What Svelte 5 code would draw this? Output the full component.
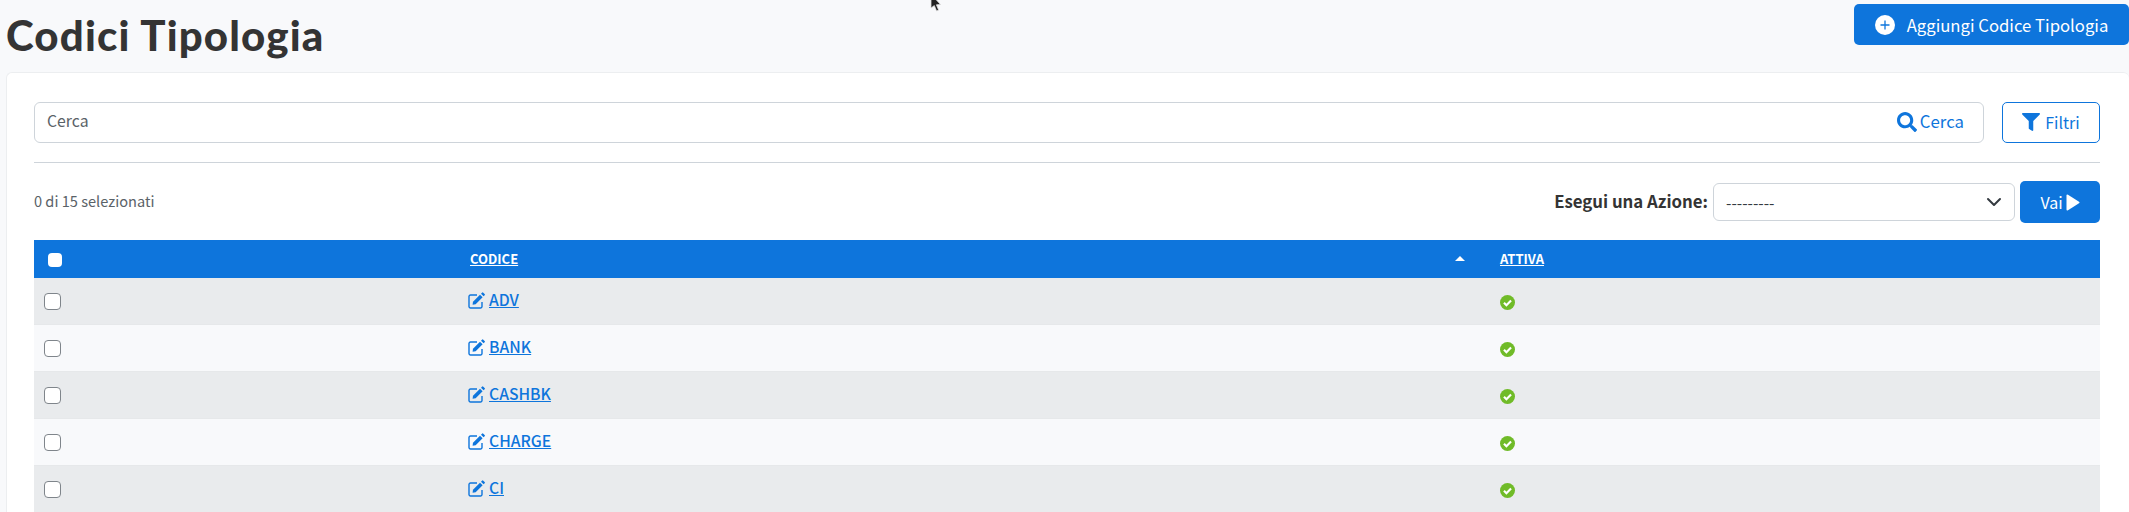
<script>
  const rows = ['ADV', 'BANK', 'CASHBK', 'CHARGE', 'CI'];
</script>

<div class="page">
  <svg class="cursor" width="14" height="14" viewBox="0 0 14 14" aria-hidden="true"><path d="M1-6 L1 8 L4.3 5.6 L6.6 11 L8.6 10 L6.4 4.8 L10.5 4.5 Z" fill="#222" stroke="#ddd" stroke-width=".8"/></svg>
  <header class="top">
    <h1>Codici Tipologia</h1>
    <button class="btn add">
      <svg width="20" height="20" viewBox="0 0 20 20" aria-hidden="true"><circle cx="10" cy="10" r="10" fill="#fff"/><path d="M10 5.5v9M5.5 10h9" stroke="#0e75dc" stroke-width="1.3"/></svg>
      <span>Aggiungi Codice Tipologia</span>
    </button>
  </header>

  <section class="card">
    <div class="search-row">
      <div class="search">
        <span class="ph">Cerca</span>
        <span class="search-btn">
          <svg width="20" height="20" viewBox="0 0 512 512" aria-hidden="true"><path fill="#0e75dc" d="M505 442.700L405.300 343c-4.500-4.500-10.600-7-17-7H372c27.600-35.300 44-79.700 44-128C416 93.100 322.900 0 208 0S0 93.100 0 208s93.100 208 208 208c48.300 0 92.700-16.400 128-44v16.300c0 6.400 2.500 12.500 7 17l99.700 99.700c9.400 9.400 24.600 9.400 33.900 0l28.300-28.300c9.400-9.400 9.400-24.600.1-34zM208 336c-70.700 0-128-57.200-128-128 0-70.700 57.200-128 128-128 70.700 0 128 57.200 128 128 0 70.700-57.200 128-128 128z"/></svg>
          Cerca
        </span>
      </div>
      <button class="btn filter">
        <svg width="18" height="18" viewBox="0 0 512 512" aria-hidden="true"><path fill="#0e75dc" d="M487.976 0H24.028C2.710 0-8.047 25.866 7.058 40.971L192 225.941V432c0 7.831 3.821 15.170 10.237 19.662l80 55.980C298.020 518.690 320 507.493 320 487.980V225.941l184.947-184.970C520.021 25.896 509.338 0 487.976 0z"/></svg>
        Filtri
      </button>
    </div>

    <hr />

    <div class="action-row">
      <span class="count">0 di 15 selezionati</span>
      <div class="actions">
        <strong>Esegui una Azione:</strong>
        <div class="select">
          <span>---------</span>
          <svg width="16" height="16" viewBox="0 0 16 16" aria-hidden="true"><path d="M2 5l6 6 6-6" fill="none" stroke="#343a40" stroke-width="2" stroke-linecap="round" stroke-linejoin="round"/></svg>
        </div>
        <button class="btn vai">
          Vai
          <svg width="15" height="17" viewBox="0 0 14 17" aria-hidden="true"><path d="M1 1.500v14a1 1 0 0 0 1.500.8l11-7a1 1 0 0 0 0-1.600l-11-7A1 1 0 0 0 1 1.500z" fill="#fff"/></svg>
        </button>
      </div>
    </div>

    <div class="table">
      <div class="tr head">
        <div class="c1"><span class="cb white"></span></div>
        <div class="c2"><u>CODICE</u><span class="sort"></span></div>
        <div class="c3"><u>ATTIVA</u></div>
      </div>
      {#each rows as r, i}
        <div class="tr row" class:odd={i % 2 === 0}>
          <div class="c1"><span class="cb"></span></div>
          <div class="c2 code">
            <svg width="17" height="17" viewBox="0 0 17 17" aria-hidden="true">
              <path d="M14 10v4.500a1.500 1.500 0 0 1-1.500 1.500h-10A1.500 1.500 0 0 1 1 14.500v-10A1.500 1.500 0 0 1 2.500 3H9" fill="none" stroke="#0e75dc" stroke-width="1.400"/>
              <path d="M5 9.700L12 2.700l2.600 2.600-7 7-3 .4z" fill="#0e75dc"/>
              <path d="M13 1.700l1-1a.9.900 0 0 1 1.300 0l1.300 1.300a.9.900 0 0 1 0 1.300l-1 1z" fill="#0e75dc"/>
            </svg>
            <a href="#top">{r}</a>
          </div>
          <div class="c3">
            <svg width="15" height="15" viewBox="0 0 14 14" aria-hidden="true"><circle cx="7" cy="7" r="7" fill="#70bb28"/><path d="M3.700 7.200l2.300 2.300 4.300-4.400" fill="none" stroke="#fff" stroke-width="2"/></svg>
          </div>
        </div>
      {/each}
    </div>
  </section>
</div>

<style>
  :global(body) { margin: 0; background: #f8f9fb; }
  .page {
    position: relative;
    height: 512px;
    overflow: hidden;
    background: #f8f9fb;
    font-family: "Noto Sans CJK JP", "Source Sans Pro", Lato, sans-serif;
    color: #343a40;
    padding-left: 6px;
    box-sizing: border-box;
  }
  .cursor { position: absolute; left: 930px; top: 0; }
  .top {
    height: 72px;
    display: flex;
    justify-content: space-between;
    align-items: flex-start;
  }
  h1 {
    margin: 12px 0 0 0;
    font: 900 42px/46px Lato, sans-serif;
    color: #343434;
    letter-spacing: 1.15px;
  }
  .btn {
    font-family: inherit;
    border-radius: 5px;
    cursor: pointer;
    display: inline-flex;
    align-items: center;
    justify-content: center;
    box-sizing: border-box;
  }
  .add {
    margin-top: 4px;
    width: 275px;
    height: 41px;
    gap: 12px;
    background: #0e75dc;
    border: 0;
    color: #fff;
    font-size: 16.7px;
    line-height: 20px;
  }
  .card {
    background: #fff;
    border: 1px solid #eceef0;
    border-right: 0;
    border-radius: 6px 6px 0 0;
    height: 460px;
    padding: 29px 29px 0 27px;
    box-sizing: border-box;
  }
  .search-row { display: flex; gap: 18px; }
  .search {
    flex: 1;
    height: 41px;
    box-sizing: border-box;
    border: 1px solid #ced4da;
    border-radius: 6px;
    display: flex;
    align-items: center;
    justify-content: space-between;
    padding: 0 19px 3px 12px;
    font-size: 15.8px;
    line-height: 20px;
  }
  .ph { color: #5a6268; }
  .search-btn { display: inline-flex; align-items: center; gap: 3px; color: #0e75dc; font-size: 16.8px; }
  .search-btn svg { margin-top: 1px; }
  .filter {
    width: 98px;
    height: 41px;
    gap: 5px;
    background: #fff;
    border: 1px solid #0e75dc;
    color: #0e75dc;
    font-size: 16px;
    line-height: 20px;
    padding-bottom: 2px;
  }
  hr {
    border: 0;
    border-top: 1px solid #ced4da;
    margin: 19px 0 18px;
  }
  .action-row {
    height: 42px;
    display: flex;
    justify-content: space-between;
    align-items: center;
    margin-bottom: 17px;
  }
  .count { font-size: 14.6px; line-height: 20px; color: #5a6268; padding-bottom: 2px; }
  .actions { display: flex; align-items: center; }
  strong { font-size: 16.8px; font-weight: 700; line-height: 20px; color: #343434; margin-right: 5px; padding-bottom: 2px; }
  .select {
    width: 302px;
    height: 38px;
    box-sizing: border-box;
    border: 1px solid #ced4da;
    border-radius: 6px;
    display: flex;
    align-items: center;
    justify-content: space-between;
    padding: 0 12px;
    font-size: 15.5px;
    line-height: 20px;
    color: #343a40;
  }
  .vai {
    width: 80px;
    height: 42px;
    margin-left: 5px;
    gap: 2px;
    background: #0e75dc;
    border: 0;
    color: #fff;
    font-size: 16px;
    line-height: 20px;
  }
  .tr {
    display: grid;
    grid-template-columns: 436px 1030px 1fr;
    align-items: center;
    box-sizing: border-box;
  }
  .head {
    height: 38px;
    background: #0e75dc;
    color: #fff;
    font-size: 13px;
    font-weight: 700;
    line-height: 16px;
  }
  .head .c2 { position: relative; }
  .sort {
    position: absolute;
    left: 985px;
    top: 5px;
    border: 5px solid transparent;
    border-top: 0;
    border-bottom: 5px solid #fff;
  }
  .row {
    height: 47px;
    background: #f8f9fb;
    border-bottom: 1px solid #e6e8ea;
    font-size: 15.7px;
    line-height: 20px;
  }
  .row.odd { background: #e9ebed; }
  .c1 { padding-left: 10px; display: flex; }
  .head .c1 { padding-left: 14px; }
  .cb {
    width: 17px;
    height: 17px;
    box-sizing: border-box;
    border: 1px solid #7f858b;
    border-radius: 4px;
    background: #fff;
  }
  .cb.white { width: 14px; height: 14px; border: 0; margin-top: 1px; }
  .code { display: flex; align-items: center; gap: 4px; margin-left: -2px; padding-bottom: 2px; }
  .code a { color: #0e75dc; text-decoration: underline; font-weight: 500; }
  .c3 { display: flex; padding-top: 2px; }
  .head .c3 { padding-top: 0; }
</style>
